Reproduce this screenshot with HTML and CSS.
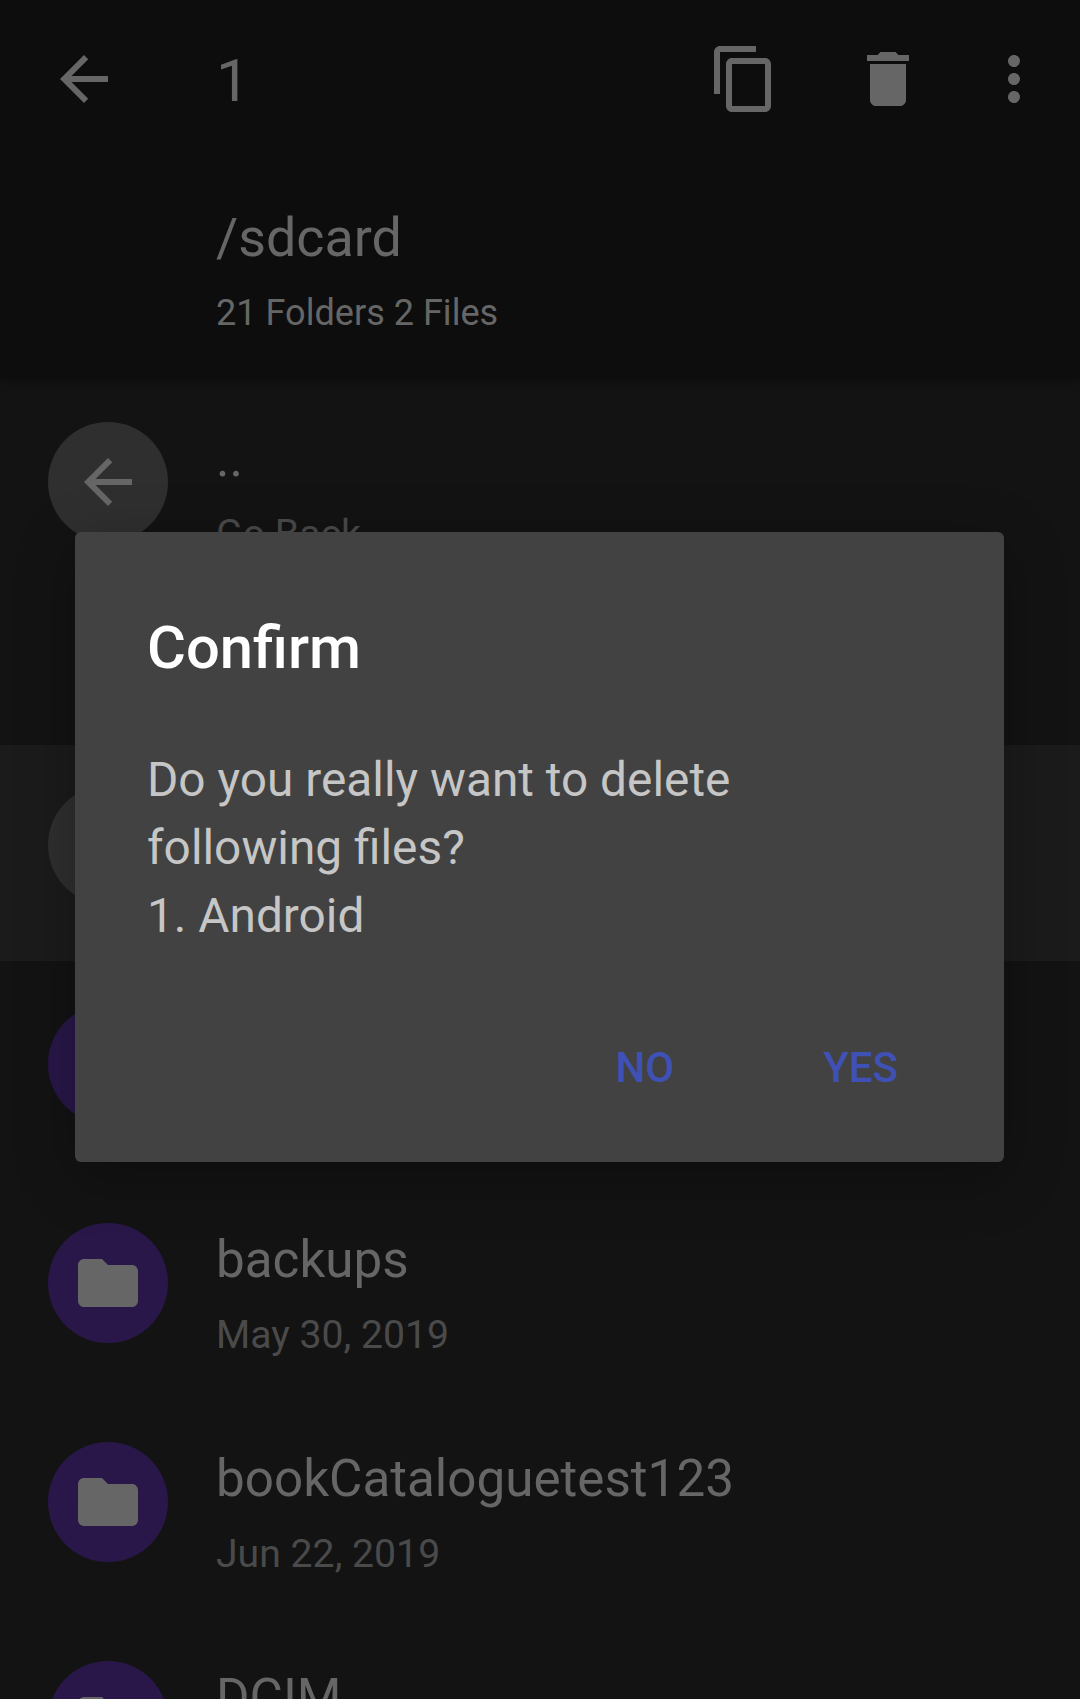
FILE: index.html
```html
<!DOCTYPE html>
<html lang="en">
<head>
<meta charset="utf-8">
<title>File manager</title>
<link rel="stylesheet" href="styles.css">
</head>
<body>
<svg class="sprite" aria-hidden="true">
  <symbol id="arrow" viewBox="0 0 24 24"><path d="M20 11H7.83l5.59-5.59L12 4l-8 8 8 8 1.41-1.41L7.83 13H20v-2z"/></symbol>
  <symbol id="folder" viewBox="0 0 24 24"><path d="M10 4H4c-1.1 0-1.99.9-1.99 2L2 18c0 1.1.9 2 2 2h16c1.1 0 2-.9 2-2V8c0-1.1-.9-2-2-2h-8l-2-2z"/></symbol>
</svg>
<div class="screen">
  <header class="header">
    <div class="toolbar">
      <svg class="icon"><use href="#arrow"/></svg>
      <span class="count">1</span>
      <svg class="icon" viewBox="0 0 24 24"><path d="M16 1H4c-1.1 0-2 .9-2 2v14h2V3h12V1zm3 4H8c-1.1 0-2 .9-2 2v14c0 1.1.9 2 2 2h11c1.1 0 2-.9 2-2V7c0-1.1-.9-2-2-2zm0 16H8V7h11v14z"/></svg>
      <svg class="icon icon-delete" viewBox="0 0 24 24"><path d="M6 19c0 1.1.9 2 2 2h8c1.1 0 2-.9 2-2V7H6v12zM19 4h-3.5l-1-1h-5l-1 1H5v2h14V4z"/></svg>
      <svg class="icon icon-more" viewBox="0 0 24 24"><path d="M12 8c1.1 0 2-.9 2-2s-.9-2-2-2-2 .9-2 2 .9 2 2 2zm0 2c-1.1 0-2 .9-2 2s.9 2 2 2 2-.9 2-2-.9-2-2-2zm0 6c-1.1 0-2 .9-2 2s.9 2 2 2 2-.9 2-2-.9-2-2-2z"/></svg>
    </div>
    <div class="path">/sdcard</div>
    <div class="summary">21 Folders 2 Files</div>
  </header>
  <main class="list">
    <div class="row row-up">
      <div class="avatar avatar-grey"><svg class="icon"><use href="#arrow"/></svg></div>
      <div class="info"><div class="name">..</div><div class="date">Go Back</div></div>
    </div>
    <div class="row row-selected"><div class="avatar avatar-grey"></div></div>
    <div class="row"><div class="avatar"></div></div>
    <div class="row">
      <div class="avatar"><svg class="icon icon-folder"><use href="#folder"/></svg></div>
      <div class="info"><div class="name">backups</div><div class="date">May 30, 2019</div></div>
    </div>
    <div class="row">
      <div class="avatar"><svg class="icon icon-folder"><use href="#folder"/></svg></div>
      <div class="info"><div class="name">bookCataloguetest123</div><div class="date">Jun 22, 2019</div></div>
    </div>
    <div class="row">
      <div class="avatar"><svg class="icon icon-folder"><use href="#folder"/></svg></div>
      <div class="info"><div class="name">DCIM</div></div>
    </div>
  </main>
  <div class="dialog" role="dialog">
    <h1 class="dialog-title">Confirm</h1>
    <p class="dialog-text">Do you really want to delete<br>following files?<br>1. Android</p>
    <div class="actions"><span class="action">NO</span><span class="action">YES</span></div>
  </div>
</div>
</body>
</html>
```
FILE: styles.css
```css
* { box-sizing: border-box; }
body {
  margin: 0;
  background: #131313;
  color: #666;
  font-family: Roboto, sans-serif;
}
.sprite { position: absolute; width: 0; height: 0; }
.screen {
  position: relative;
  height: 1699px;
  overflow: hidden;
}
.icon { display: block; width: 72px; height: 72px; flex: none; fill: #666; }

.header {
  position: relative;
  height: 379px;
  background: #0d0d0d;
  box-shadow: 0 3px 10px rgba(0, 0, 0, .3);
}
.toolbar {
  display: flex;
  align-items: center;
  height: 158px;
  padding: 0 30px 0 48px;
}
.count { flex: 1; padding: 3px 0 0 96px; font-size: 60px; line-height: 70px; }
.icon-delete { margin-left: 72px; }
.icon-more { margin-left: 54px; }
.path { padding: 46px 0 0 216px; font-size: 53.8px; line-height: 68px; }
.summary { padding: 19px 0 0 216px; font-size: 36.1px; line-height: 44px; }

.list { padding-top: 3px; }
.row {
  display: flex;
  height: 216px;
  margin-bottom: 3px;
  padding: 40px 48px;
}
.row-up { margin-bottom: 147px; }
.row-selected { background: #1b1b1b; }
.avatar {
  display: flex;
  align-items: center;
  justify-content: center;
  flex: none;
  width: 120px;
  height: 120px;
  border-radius: 50%;
  background: #291749;
}
.avatar-grey { background: #2f2f2f; }
.info { padding: 7px 0 0 48px; white-space: nowrap; }
.name { font-size: 51.2px; line-height: 60px; }
.date { margin-top: 20px; color: #4a4a4a; font-size: 39.2px; line-height: 50px; }

.dialog {
  position: absolute;
  left: 75px;
  top: 532px;
  width: 929px;
  height: 630px;
  padding: 81px 72px 0;
  border-radius: 6px;
  background: #424242;
  box-shadow: 0 15px 60px rgba(0, 0, 0, .28);
}
.dialog-title { margin: 0; color: #fff; font-size: 59.7px; font-weight: 500; line-height: 70px; }
.dialog-text { margin: 63px 0 0; color: #c6c6c6; font-size: 47.8px; line-height: 68px; }
.actions {
  display: flex;
  justify-content: flex-end;
  gap: 149px;
  margin-top: 93px;
  padding-right: 34px;
  color: #3f51b5;
  font-size: 42px;
  font-weight: 500;
  line-height: 50px;
}
```
